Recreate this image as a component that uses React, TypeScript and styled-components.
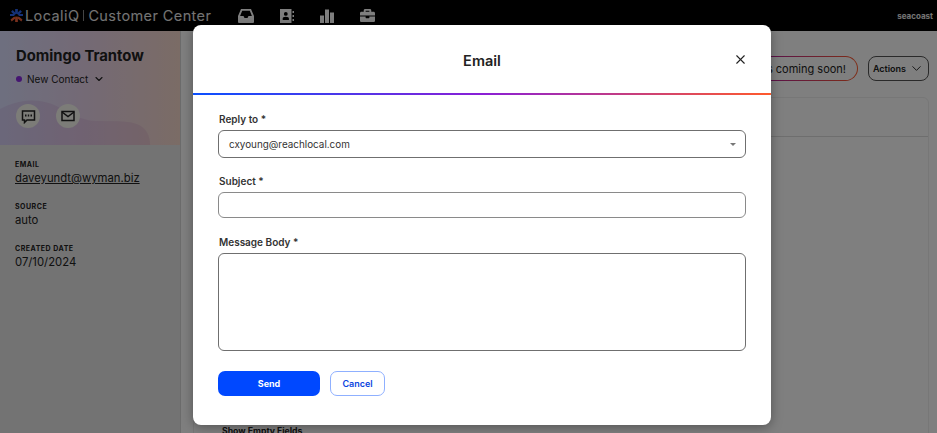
import React from 'react';
import styled, { createGlobalStyle } from 'styled-components';
import { FaBriefcase } from 'react-icons/fa';
import { ChevronDown, X } from 'lucide-react';

const FONT = '"Inter", "Liberation Sans", sans-serif';

const GlobalStyle = createGlobalStyle`
  html, body {
    margin: 0;
    padding: 0;
    background: #fff;
  }
  * {
    box-sizing: border-box;
  }
`;

const Logo = () => (
  <svg width="13" height="13" viewBox="0 0 24 24">
    <g fill="#2a63f0">
      <path d="M9.5 0h5v9h-5z" />
      <path d="M2 5l3-3 6.5 6.5-3 3z" />
      <path d="M22 5l-3-3-6.5 6.5 3 3z" />
      <path d="M0 9h8v4H0zM16 9h8v4h-8z" />
    </g>
    <g fill="#f0603a">
      <path d="M9.5 14h5v10h-5z" />
      <path d="M3 23l-2-3.500 7-5.500 2.500 3z" />
      <path d="M21 23l2-3.500-7-5.500-2.500 3z" />
    </g>
  </svg>
);

const InboxIcon = () => (
  <svg width="16" height="14" viewBox="0 0 16 14" fill="currentColor">
    <path
      fillRule="evenodd"
      d="M3 0h10l3 7v6a1 1 0 0 1-1 1H1a1 1 0 0 1-1-1V7zM4.200 1.700L2.100 7h3.400l1 2h3l1-2h3.400l-2.100-5.300z"
    />
  </svg>
);

const ContactsIcon = () => (
  <svg width="14" height="14" viewBox="0 0 14 14" fill="currentColor">
    <path
      fillRule="evenodd"
      d="M0 0h11.500v14H0zM5.800 3a1.900 1.900 0 1 0 0 3.800 1.900 1.900 0 0 0 0-3.800zM2.700 11h6.200V9.600c0-1-1-1.800-3.100-1.800s-3.100.8-3.100 1.800z"
    />
    <path d="M12.500 2H14v2h-1.500zM12.500 6H14v2h-1.500zM12.500 10H14v2h-1.500z" />
  </svg>
);

const BarsIcon = () => (
  <svg width="14" height="14" viewBox="0 0 14 14" fill="currentColor">
    <path d="M0 6.500h4V14H0zM5 .5h4V14H5zM10 3.500h4V14h-4z" />
  </svg>
);

const SmsIcon = () => (
  <svg width="15" height="15" viewBox="0 0 15 15" fill="none" stroke="currentColor" strokeWidth="1.500">
    <path d="M1.500 2h12v9H6l-2.500 2.500V11h-2z" />
    <path d="M4 6.500h1.500M6.800 6.500h1.400M9.500 6.500H11" strokeWidth="2" />
  </svg>
);

const MailIcon = () => (
  <svg width="14" height="14" viewBox="0 0 14 14" fill="none" stroke="currentColor" strokeWidth="1.500">
    <path d="M1 2.500h12v9H1z" />
    <path d="M1 3l6 4.500L13 3" />
  </svg>
);

const App: React.FC = () => {
  return (
    <Page>
      <GlobalStyle />
      <TopBar>
        <Brand>
          <Logo />
          <BrandName>LocaliQ</BrandName>
          <BrandDivider />
          <BrandName>Customer Center</BrandName>
        </Brand>
        <NavIcons>
          <InboxIcon />
          <ContactsIcon />
          <BarsIcon />
          <FaBriefcase size={15} />
        </NavIcons>
        <Account>seacoast</Account>
      </TopBar>
      <Content>
        <Sidebar>
          <Hero>
            <HeroWave viewBox="0 0 181 46" preserveAspectRatio="none">
              <path d="M0 10C12 4 24 0 40 2c22 3 34 19 56 20 14 .5 34-1 44 4 8 4 11 12 11 20H0z" />
            </HeroWave>
            <ContactName>Domingo Trantow</ContactName>
            <StatusRow>
              <StatusDot />
              New Contact
              <ChevronDown size={12} strokeWidth={2.2} />
            </StatusRow>
            <HeroActions>
              <RoundButton>
                <SmsIcon />
              </RoundButton>
              <RoundButton>
                <MailIcon />
              </RoundButton>
            </HeroActions>
          </Hero>
          <Details>
            <Detail>
              <DetailLabel>EMAIL</DetailLabel>
              <DetailLink>daveyundt@wyman.biz</DetailLink>
            </Detail>
            <Detail>
              <DetailLabel>SOURCE</DetailLabel>
              <DetailValue>auto</DetailValue>
            </Detail>
            <Detail>
              <DetailLabel>CREATED DATE</DetailLabel>
              <DetailValue>07/10/2024</DetailValue>
            </Detail>
          </Details>
        </Sidebar>
        <Main>
          <ActionRow>
            <ComingSoon>Texting is coming soon!</ComingSoon>
            <ActionsButton>
              Actions
              <ChevronDown size={15} strokeWidth={1.5} />
            </ActionsButton>
          </ActionRow>
          <Card>
            <CardHeader />
            <CardBody>
              <ShowEmpty>Show Empty Fields</ShowEmpty>
            </CardBody>
          </Card>
        </Main>
      </Content>
      <Backdrop />
      <Modal>
        <ModalHeader>
          <ModalTitle>Email</ModalTitle>
          <CloseButton>
            <X size={15} strokeWidth={1.8} />
          </CloseButton>
        </ModalHeader>
        <GradientLine />
        <ModalBody>
          <Field>
            <FieldLabel>Reply to *</FieldLabel>
            <SelectBox>
              cxyoung@reachlocal.com
              <SelectCaret />
            </SelectBox>
          </Field>
          <Field>
            <FieldLabel>Subject *</FieldLabel>
            <TextInput />
          </Field>
          <Field>
            <FieldLabel>Message Body *</FieldLabel>
            <TextArea />
          </Field>
          <ButtonRow>
            <SendButton>Send</SendButton>
            <CancelButton>Cancel</CancelButton>
          </ButtonRow>
        </ModalBody>
      </Modal>
    </Page>
  );
};

export default App;

const Page = styled.div`
  position: relative;
  width: 937px;
  height: 433px;
  overflow: hidden;
  font-family: ${FONT};
  color: #222;
  background: #fff;
`;

const TopBar = styled.header`
  height: 31px;
  background: #000;
  display: flex;
  align-items: center;
  padding: 0 4px 0 10px;
`;

const Brand = styled.div`
  display: flex;
  align-items: center;
  gap: 2px;
  width: 228px;
`;

const BrandName = styled.span`
  color: #e8e8e8;
  font-size: 14.5px;
  letter-spacing: 0.4px;
  white-space: nowrap;
`;

const BrandDivider = styled.span`
  width: 1px;
  height: 11px;
  background: #888;
  margin: 0 2px;
`;

const NavIcons = styled.nav`
  display: flex;
  align-items: center;
  gap: 26px;
  color: #fff;
`;

const Account = styled.span`
  margin-left: auto;
  color: #e8e8e8;
  font-size: 8px;
  font-weight: 700;
`;

const Content = styled.div`
  display: flex;
  height: 402px;
`;

const Sidebar = styled.aside`
  width: 181px;
  background: #e6e6e6;
  border-right: 1px solid #d8d8d8;
  flex: none;
`;

const Hero = styled.div`
  position: relative;
  height: 114px;
  padding: 16px 16px 0;
  background: linear-gradient(90deg, #dcdfff 0%, #e8d4ec 45%, #f6d8cc 100%);
`;

const HeroWave = styled.svg`
  position: absolute;
  left: 0;
  bottom: 0;
  width: 180px;
  height: 46px;
  fill: rgba(170, 90, 170, 0.12);
`;

const ContactName = styled.h1`
  position: relative;
  margin: 0;
  font-size: 14.8px;
  line-height: 18px;
  font-weight: 700;
`;

const StatusRow = styled.div`
  position: relative;
  display: flex;
  align-items: center;
  gap: 5px;
  margin-top: 8px;
  font-size: 10px;
  line-height: 12px;
`;

const StatusDot = styled.span`
  width: 6px;
  height: 6px;
  border-radius: 50%;
  background: #8a2be2;
`;

const HeroActions = styled.div`
  position: relative;
  display: flex;
  gap: 16px;
  margin-top: 19px;
`;

const RoundButton = styled.span`
  width: 24px;
  height: 24px;
  border-radius: 50%;
  background: #f8f8f0;
  display: flex;
  align-items: center;
  justify-content: center;
`;

const Details = styled.div`
  padding: 15px 15px;
  display: flex;
  flex-direction: column;
  gap: 16px;
`;

const Detail = styled.div`
  display: flex;
  flex-direction: column;
  gap: 2px;
`;

const DetailLabel = styled.span`
  font-size: 7px;
  line-height: 9px;
  font-weight: 700;
  letter-spacing: 0.5px;
`;

const DetailValue = styled.span`
  font-size: 11.3px;
  line-height: 15px;
`;

const DetailLink = styled(DetailValue)`
  text-decoration: underline;
`;

const Main = styled.main`
  flex: 1;
  min-width: 0;
  padding: 25px 8px 0 12px;
`;

const ActionRow = styled.div`
  display: flex;
  justify-content: flex-end;
  gap: 10px;
  height: 25px;
`;

const ComingSoon = styled.div`
  height: 25px;
  padding: 0 11px;
  display: flex;
  align-items: center;
  font-size: 11px;
  border-radius: 13px;
  border: 1px solid transparent;
  background:
    linear-gradient(#fff, #fff) padding-box,
    linear-gradient(90deg, #0a50ff 0%, #b0209a 36%, #ff5a2c 100%) border-box;
`;

const ActionsButton = styled.div`
  width: 61px;
  height: 25px;
  display: flex;
  align-items: center;
  justify-content: center;
  gap: 3px;
  font-size: 9px;
  font-weight: 600;
  border-radius: 8px;
  border: 1px solid #555;
`;

const Card = styled.section`
  margin-top: 16px;
  height: 400px;
  border: 1px solid #eee;
  border-radius: 6px;
`;

const CardHeader = styled.div`
  height: 39px;
  border-bottom: 1px solid #ddd;
`;

const CardBody = styled.div`
  padding: 281px 0 0 28px;
`;

const ShowEmpty = styled.span`
  font-size: 8.7px;
  font-weight: 700;
`;

const Backdrop = styled.div`
  position: absolute;
  inset: 0;
  background: rgba(0, 0, 0, 0.5);
`;

const Modal = styled.div`
  position: absolute;
  left: 193px;
  top: 25px;
  width: 578px;
  height: 400px;
  background: #fff;
  border-radius: 8px;
  box-shadow: 0 2px 12px rgba(0, 0, 0, 0.35);
  overflow: hidden;
`;

const ModalHeader = styled.div`
  position: relative;
  height: 68px;
  padding-top: 2px;
  display: flex;
  align-items: center;
  justify-content: center;
`;

const ModalTitle = styled.h2`
  margin: 0;
  font-size: 14.5px;
  font-weight: 600;
  color: #222;
`;

const CloseButton = styled.span`
  position: absolute;
  right: 23px;
  top: 27px;
  display: flex;
  color: #222;
`;

const GradientLine = styled.div`
  height: 2px;
  background: linear-gradient(90deg, #0a50ff 0%, #8a1fd6 50%, #ff5a2c 100%);
`;

const ModalBody = styled.div`
  padding: 17px 25px 0;
  display: flex;
  flex-direction: column;
  gap: 16px;
`;

const Field = styled.div`
  display: flex;
  flex-direction: column;
  gap: 4px;
`;

const FieldLabel = styled.label`
  padding-left: 1px;
  font-size: 10px;
  line-height: 14px;
  font-weight: 600;
  color: #333;
`;

const SelectBox = styled.div`
  position: relative;
  height: 28px;
  padding: 0 10px;
  display: flex;
  align-items: center;
  font-size: 9.9px;
  color: #333;
  border: 1px solid #6f6f6f;
  border-radius: 6px;
`;

const SelectCaret = styled.span`
  position: absolute;
  right: 9px;
  top: 12px;
  border-left: 3.5px solid transparent;
  border-right: 3.5px solid transparent;
  border-top: 3.5px solid #777;
`;

const TextInput = styled.div`
  height: 26px;
  margin-bottom: 1px;
  border: 1px solid #8a8a8a;
  border-radius: 6px;
`;

const TextArea = styled.div`
  height: 98px;
  border: 1px solid #6f6f6f;
  border-radius: 6px;
`;

const ButtonRow = styled.div`
  display: flex;
  gap: 10px;
  margin-top: 4px;
`;

const SendButton = styled.span`
  width: 102px;
  height: 25px;
  display: flex;
  align-items: center;
  justify-content: center;
  font-size: 9px;
  font-weight: 700;
  color: #fff;
  background: #0048ff;
  border-radius: 7px;
`;

const CancelButton = styled.span`
  width: 55px;
  height: 25px;
  display: flex;
  align-items: center;
  justify-content: center;
  font-size: 9px;
  font-weight: 600;
  color: #0b45e0;
  background: #fff;
  border: 1px solid #8fb0ff;
  border-radius: 7px;
`;
